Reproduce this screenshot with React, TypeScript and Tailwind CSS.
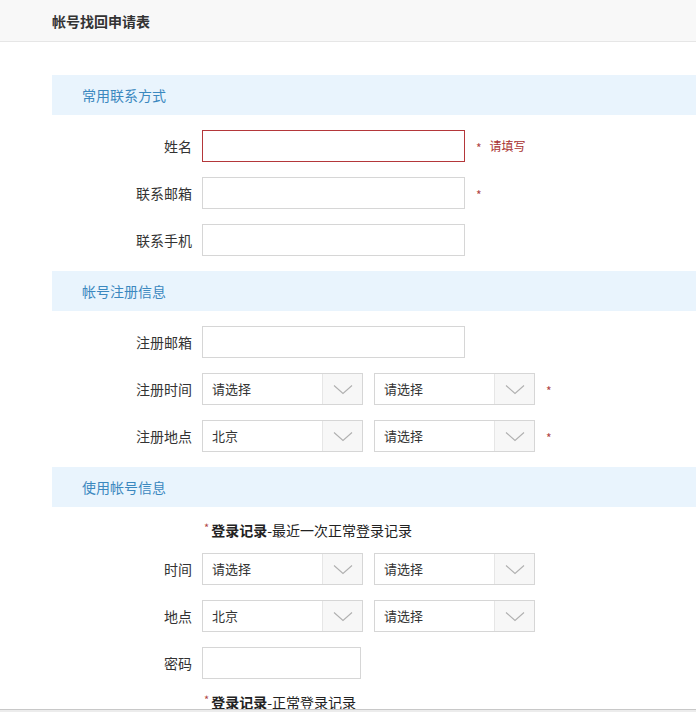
import type { ReactNode } from "react";

const FONT = {
  fontFamily: '"SimSun", "Noto Sans CJK SC", "Liberation Sans", sans-serif',
};

function Chevron() {
  return (
    <svg width="20" height="11" viewBox="0 0 20 11" fill="none">
      <path d="M1 1.5 L10 9.5 L19 1.5" stroke="#b0b0b0" strokeWidth="1.1" />
    </svg>
  );
}

function Select({ value }: { value: string }) {
  return (
    <div className="flex h-[32px] w-[161px] border border-[#d6d6d6] bg-white">
      <div className="flex flex-1 items-center pl-[9px] text-[13px] text-[#333]">{value}</div>
      <div className="flex w-[40px] items-center justify-center border-l border-[#e6e6e6] bg-[#f7f7f7]">
        <Chevron />
      </div>
    </div>
  );
}

function Input({ width = "w-[263px]", error = false }: { width?: string; error?: boolean }) {
  return (
    <div
      className={
        error
          ? `${width} h-[32px] border border-[#b4373a] bg-white`
          : `${width} h-[32px] border border-[#d6d6d6] bg-white`
      }
    />
  );
}

function Star() {
  return <span className="text-[12px] leading-none text-[#b04545]">*</span>;
}

function Row({ label, children }: { label: string; children: ReactNode }) {
  return (
    <div className="flex h-[32px] items-center">
      <div className="w-[150px] pr-[10px] text-right text-[14px] text-[#333]">{label}</div>
      {children}
    </div>
  );
}

function Section({ title }: { title: string }) {
  return (
    <div className="flex h-[40px] items-center bg-[#e9f4fd] pl-[30px] text-[14px] text-[#3b88bf]">
      {title}
    </div>
  );
}

function Note({ text }: { text: string }) {
  return (
    <div className="flex h-[16px] items-center pl-[152px] text-[14px] text-[#222]">
      <span className="mr-[2px] self-start text-[11px] leading-none text-[#b04545]">*</span>
      <span className="font-bold">登录记录</span>
      <span>-{text}</span>
    </div>
  );
}

export default function App() {
  return (
    <div className="relative h-[712px] overflow-hidden bg-white" style={FONT}>
      <div className="flex h-[42px] items-center border-b border-[#e6e6e6] bg-[#f8f8f8] pl-[52px]">
        <span className="mt-[2px] text-[14px] font-bold text-[#333]">帐号找回申请表</span>
      </div>

      <div className="ml-[52px] mt-[33px] flex flex-col gap-[15px]">
        <Section title="常用联系方式" />
        <Row label="姓名">
          <Input error />
          <span className="ml-[11px]"><Star /></span>
          <span className="ml-[8px] text-[12px] text-[#a8302f]">请填写</span>
        </Row>
        <Row label="联系邮箱">
          <Input />
          <span className="ml-[11px]"><Star /></span>
        </Row>
        <Row label="联系手机">
          <Input />
        </Row>

        <Section title="帐号注册信息" />
        <Row label="注册邮箱">
          <Input />
        </Row>
        <Row label="注册时间">
          <Select value="请选择" />
          <div className="ml-[11px]"><Select value="请选择" /></div>
          <span className="ml-[11px]"><Star /></span>
        </Row>
        <Row label="注册地点">
          <Select value="北京" />
          <div className="ml-[11px]"><Select value="请选择" /></div>
          <span className="ml-[11px]"><Star /></span>
        </Row>

        <Section title="使用帐号信息" />
        <Note text="最近一次正常登录记录" />
        <Row label="时间">
          <Select value="请选择" />
          <div className="ml-[11px]"><Select value="请选择" /></div>
        </Row>
        <Row label="地点">
          <Select value="北京" />
          <div className="ml-[11px]"><Select value="请选择" /></div>
        </Row>
        <Row label="密码">
          <Input width="w-[159px]" />
        </Row>
        <Note text="正常登录记录" />
      </div>

      <div className="fixed inset-x-0 bottom-0 h-[3px] border-t border-[#c8c8c8] bg-[#ececec]" />
    </div>
  );
}
